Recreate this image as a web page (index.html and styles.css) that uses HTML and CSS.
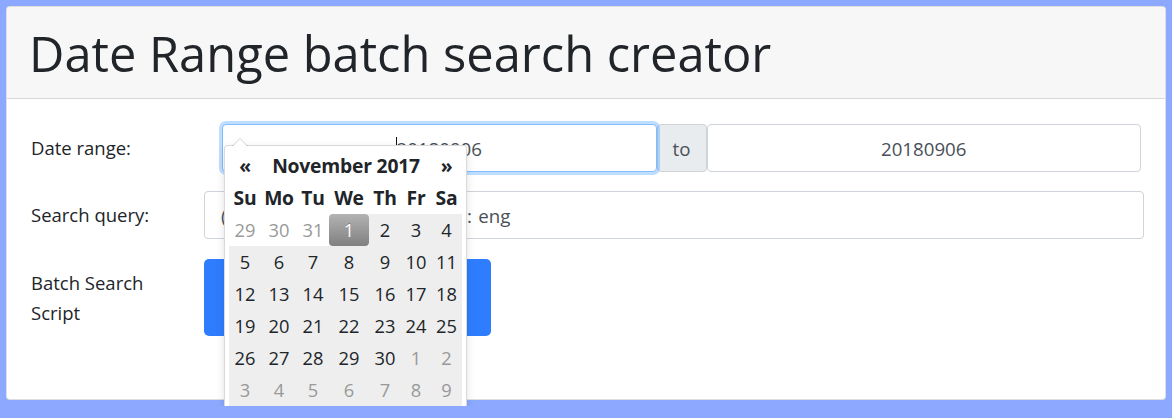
FILE: index.html
```html
<!DOCTYPE html>
<html lang="en">
<head>
<meta charset="utf-8">
<title>Date Range batch search creator</title>
<link rel="stylesheet" href="styles.css">
</head>
<body>
<div class="card">
  <div class="card-header">
    <h1 class="title">Date Range batch search creator</h1>
  </div>
  <div class="card-body">
    <div class="form-row row-date">
      <label class="form-label">Date range:</label>
      <div class="date-field">
        <div class="input-group">
          <div class="input input-focus"><span class="value caret">20180906</span></div>
          <div class="addon">to</div>
          <div class="input"><span class="value">20180906</span></div>
        </div>
        <div class="datepicker">
          <table class="cal">
            <colgroup>
              <col class="c-su"><col class="c-mo"><col class="c-tu"><col class="c-we"><col class="c-th"><col class="c-fr"><col class="c-sa">
            </colgroup>
            <thead>
              <tr class="cal-head">
                <th class="nav">&laquo;</th>
                <th colspan="5" class="month">November 2017</th>
                <th class="nav">&raquo;</th>
              </tr>
              <tr class="dow">
                <th>Su</th><th>Mo</th><th>Tu</th><th>We</th><th>Th</th><th>Fr</th><th>Sa</th>
              </tr>
            </thead>
            <tbody>
              <tr><td class="old">29</td><td class="old">30</td><td class="old">31</td><td class="active">1</td><td class="range">2</td><td class="range">3</td><td class="range">4</td></tr>
              <tr><td class="range">5</td><td class="range">6</td><td class="range">7</td><td class="range">8</td><td class="range">9</td><td class="range">10</td><td class="range">11</td></tr>
              <tr><td class="range">12</td><td class="range">13</td><td class="range">14</td><td class="range">15</td><td class="range">16</td><td class="range">17</td><td class="range">18</td></tr>
              <tr><td class="range">19</td><td class="range">20</td><td class="range">21</td><td class="range">22</td><td class="range">23</td><td class="range">24</td><td class="range">25</td></tr>
              <tr><td class="range">26</td><td class="range">27</td><td class="range">28</td><td class="range">29</td><td class="range">30</td><td class="range new">1</td><td class="range new">2</td></tr>
              <tr><td class="range new">3</td><td class="range new">4</td><td class="range new">5</td><td class="range new">6</td><td class="range new">7</td><td class="range new">8</td><td class="range new">9</td></tr>
            </tbody>
          </table>
        </div>
      </div>
    </div>
    <div class="form-row row-query">
      <label class="form-label">Search query:</label>
      <div class="input input-left"><span class="value query">(climate warming) AND lang: eng</span></div>
    </div>
    <div class="form-row row-script">
      <label class="form-label">Batch Search Script</label>
      <div class="btn-wrap"><div class="btn-primary"></div></div>
    </div>
  </div>
</div>
</body>
</html>
```

FILE: styles.css
```css
* { box-sizing: border-box; }

html, body {
  margin: 0;
  padding: 0;
}

body {
  background: #8ca9ff;
  padding: 6px;
  font-family: "Open Sans", "Noto Sans", sans-serif;
  color: #212529;
}

.card {
  background: #fff;
  border: 1px solid rgba(0, 0, 0, 0.125);
  border-radius: 4px;
  overflow: visible;
}

.card-header {
  background: #f7f7f7;
  border-bottom: 1px solid rgba(0, 0, 0, 0.125);
  border-radius: 4px 4px 0 0;
  padding: 17px 22px 16px;
}

.title {
  margin: 0;
  font-size: 48.8px;
  font-weight: 500;
  line-height: 58px;
  color: #212529;
}

.card-body {
  padding: 25px 21px 63px 24px;
}

.form-row {
  display: grid;
  grid-template-columns: 173px 1fr;
}

.row-date { margin-bottom: 19px; }
.row-query { margin-bottom: 20px; }

.form-label {
  font-size: 18.5px;
  line-height: 30px;
  padding-top: 9px;
  padding-right: 30px;
  color: #212529;
}

.date-field {
  position: relative;
  margin-left: 18px;
  margin-right: 3px;
}

.input-group {
  display: flex;
  height: 48px;
}

.input {
  flex: 1;
  height: 48px;
  border: 1px solid #ced4da;
  border-radius: 4px;
  background: #fff;
  display: flex;
  align-items: center;
  justify-content: center;
  font-size: 18.7px;
  color: #495057;
  white-space: nowrap;
  overflow: hidden;
}

.input-focus {
  position: relative;
  z-index: 2;
  border-color: #80bdff;
  box-shadow: 0 0 0 3px rgba(0, 123, 255, 0.25);
  overflow: visible;
}

.input-left {
  justify-content: flex-start;
  padding-left: 16px;
}

.value { position: relative; }

.query { word-spacing: 1.6px; }

.caret::before {
  content: "";
  position: absolute;
  left: -1px;
  top: 1px;
  width: 1px;
  height: 26px;
  background: #111;
}

.addon {
  width: 50px;
  flex: none;
  height: 48px;
  border: 1px solid #ced4da;
  border-radius: 4px;
  background: #e9ecef;
  display: flex;
  align-items: center;
  justify-content: center;
  font-size: 18.7px;
  color: #495057;
}

.btn-wrap { display: flex; }

.btn-primary {
  width: 287px;
  height: 77px;
  background: #2f7dff;
  border-radius: 5px;
}

/* datepicker dropdown */
.datepicker {
  position: absolute;
  left: 2px;
  top: 21px;
  z-index: 10;
  background: #fff;
  border: 1px solid rgba(0, 0, 0, 0.15);
  border-radius: 4px;
  padding: 4px;
  box-shadow: 0 3px 8px rgba(0, 0, 0, 0.12);
}

.datepicker::before {
  content: "";
  position: absolute;
  top: -8px;
  left: 7px;
  border-left: 8px solid transparent;
  border-right: 8px solid transparent;
  border-bottom: 8px solid rgba(0, 0, 0, 0.18);
}

.datepicker::after {
  content: "";
  position: absolute;
  top: -7px;
  left: 8px;
  border-left: 7px solid transparent;
  border-right: 7px solid transparent;
  border-bottom: 7px solid #fff;
}

.cal {
  border-collapse: separate;
  border-spacing: 0;
  table-layout: fixed;
  width: 233px;
  font-size: 18.3px;
  color: #212529;
}

.c-su { width: 32px; }
.c-mo { width: 36px; }
.c-tu { width: 32px; }
.c-we { width: 40px; }
.c-th { width: 32px; }
.c-fr { width: 30px; }
.c-sa { width: 31px; }

.cal th,
.cal td {
  height: 32px;
  padding: 0;
  text-align: center;
  line-height: 32px;
  white-space: nowrap;
  overflow: visible;
}

.cal th {
  font-weight: 700;
  font-size: 19.3px;
  letter-spacing: -0.2px;
}

.cal td.old { color: #999; }

.cal td.range { background: #eee; }

.cal td.new { color: #999; }

.cal td.active {
  background: linear-gradient(to bottom, #b3b3b3, #808080);
  color: #fff;
  border-radius: 4px;
  text-shadow: 0 -1px 0 rgba(0, 0, 0, 0.25);
}
```
